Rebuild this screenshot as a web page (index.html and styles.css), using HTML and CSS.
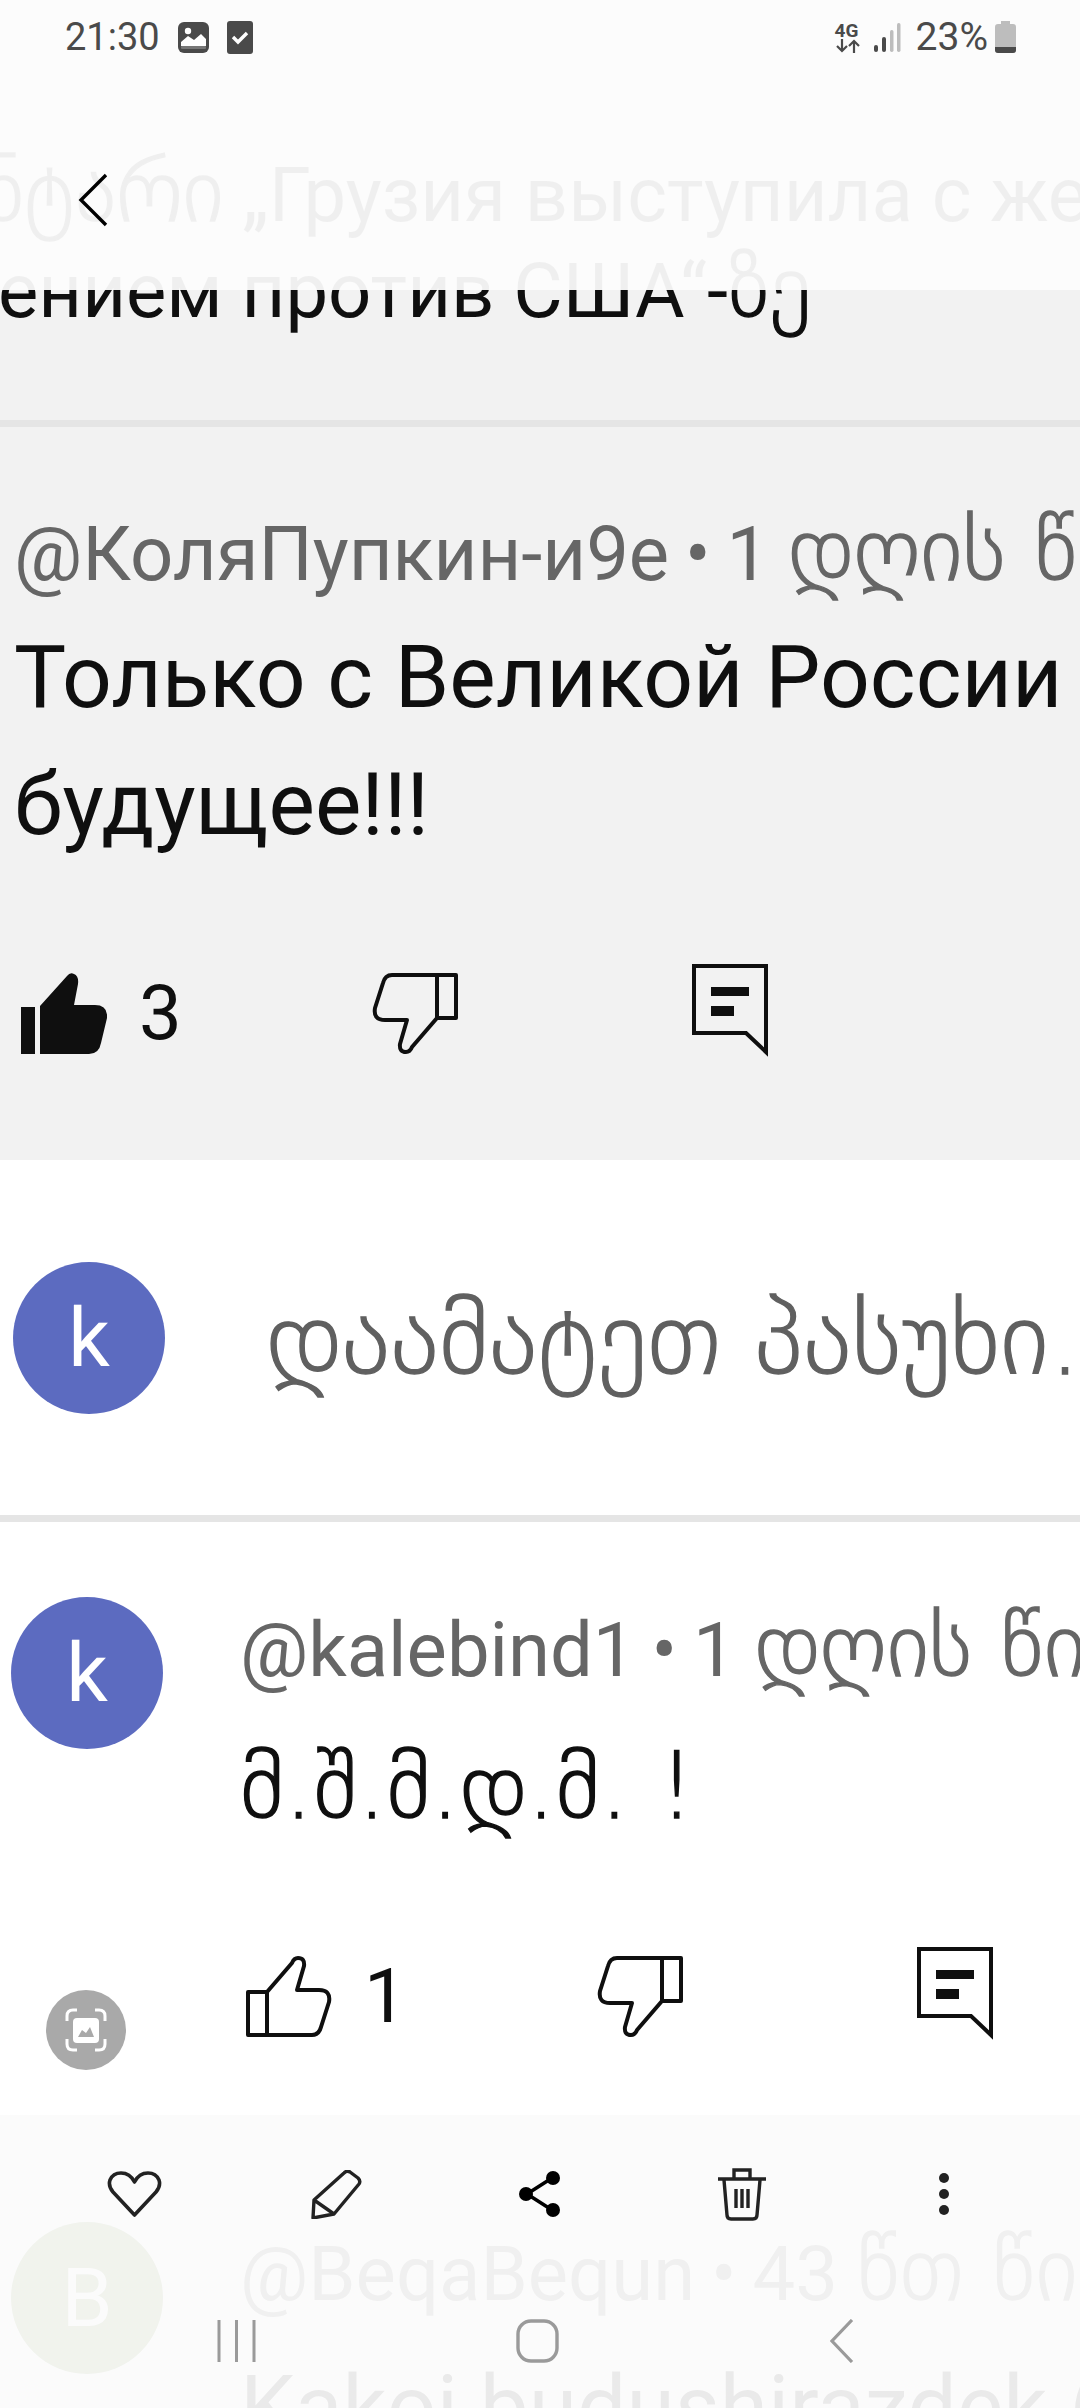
FILE: index.html
```html
<!DOCTYPE html>
<html lang="ka">
<head>
    <meta charset="UTF-8">
    <meta name="viewport" content="width=device-width, initial-scale=1.0">
    <title>პასუხები</title>
    <link rel="stylesheet" href="styles.css">
</head>
<body>
    <svg class="defs" width="0" height="0">
        <symbol id="thumb" viewBox="0 0 86 81">
            <path d="M21 36H2V79H66Q73 79 75 71L83 46Q85 34 73 34H51L58 10Q59 2 52 2Q48 2 46 7ZM21 36V79" fill="none" stroke="#0f0f0f" stroke-width="4" stroke-linejoin="round"/>
        </symbol>
        <symbol id="thumb-on" viewBox="0 0 86 81">
            <path d="M0 34H14V81H0ZM19 33L46 3Q49 -1 53 1Q58 3 57 11L53 32H74Q87 32 86 45L80 70Q78 81 68 81H19Z" fill="#0f0f0f"/>
        </symbol>
        <symbol id="reply" viewBox="0 0 76 95">
            <path d="M2 3H74V89L54 70H2Z" fill="none" stroke="#0f0f0f" stroke-width="4"/>
            <path d="M19 24H57V33H19ZM19 43H42V53H19Z" fill="#0f0f0f"/>
        </symbol>
    </svg>

    <div class="page">
        <main>
            <section class="thread">
                <div class="title">
                    <div class="title-line one"><span class="ka">ნტარი</span> „Грузия выступила с жесточайшим</div>
                    <div class="title-line two">ением против США“-<span class="ka">ზე</span></div>
                </div>
                <div class="rule"></div>
                <article class="comment-top">
                    <div class="meta">@КоляПупкин-и9е <span class="dot">•</span> 1 <span class="ka">დღის წინ</span></div>
                    <p class="body-line first">Только с Великой России</p>
                    <p class="body-line">будущее!!!</p>
                    <div class="actions">
                        <div class="slot like">
                            <svg class="thumb"><use href="#thumb-on"/></svg>
                            <span class="count">3</span>
                        </div>
                        <div class="slot dislike">
                            <svg class="thumb flip"><use href="#thumb"/></svg>
                        </div>
                        <svg class="reply"><use href="#reply"/></svg>
                    </div>
                </article>
            </section>

            <section class="add-reply">
                <div class="avatar">k</div>
                <div class="placeholder ka">დაამატეთ პასუხი...</div>
            </section>
            <div class="rule"></div>

            <article class="comment">
                <div class="avatar">k</div>
                <div class="comment-main">
                    <div class="meta">@kalebind1 <span class="dot">•</span> 1 <span class="ka">დღის წინ</span></div>
                    <p class="body-line ka geo-body">მ.შ.მ.დ.მ. !</p>
                    <div class="actions">
                        <div class="slot like">
                            <svg class="thumb"><use href="#thumb"/></svg>
                            <span class="count">1</span>
                        </div>
                        <div class="slot dislike">
                            <svg class="thumb flip"><use href="#thumb"/></svg>
                        </div>
                        <svg class="reply"><use href="#reply"/></svg>
                    </div>
                </div>
            </article>

            <article class="comment next">
                <div class="avatar green">B</div>
                <div class="comment-main">
                    <div class="meta">@BeqaBequn <span class="dot">•</span> 43 <span class="ka">წთ წინ</span></div>
                    <p class="body-line">Kakoi budushirazdek (</p>
                </div>
            </article>
        </main>

        <header class="topbar">
            <div class="status">
                <div class="status-left">
                    <span class="time">21:30</span>
                    <svg class="st-img" viewBox="0 0 31 31">
                        <rect width="31" height="31" rx="6" fill="#4a4a4a"/>
                        <circle cx="10" cy="9" r="3.2" fill="#fff"/>
                        <path d="M3 24V20L10 14L16 18L23 12L28 17V24Z" fill="#fff"/>
                        <rect x="3" y="24" width="25" height="3" rx="1" fill="#fff" opacity=".25"/>
                    </svg>
                    <svg class="st-check" viewBox="0 0 26 33">
                        <rect width="26" height="33" rx="3" fill="#4a4a4a"/>
                        <path d="M6 16L11 21L20 12" fill="none" stroke="#fff" stroke-width="3.4"/>
                    </svg>
                </div>
                <div class="status-right">
                    <div class="net">
                        <span class="net-label">4G</span>
                        <svg class="net-arrows" viewBox="0 0 26 14">
                            <path d="M7 0V12M2 7L7 12L12 7M19 14V2M14 7L19 2L24 7" fill="none" stroke="#4a4a4a" stroke-width="2.2"/>
                        </svg>
                    </div>
                    <svg class="signal" viewBox="0 0 27 29">
                        <rect x="0" y="22" width="4" height="7" rx="2" fill="#4a4a4a"/>
                        <rect x="8" y="14" width="4" height="15" rx="2" fill="#4a4a4a"/>
                        <rect x="16" y="7" width="3.5" height="22" rx="1.7" fill="#bdbdbd"/>
                        <rect x="23" y="0" width="3.5" height="29" rx="1.7" fill="#bdbdbd"/>
                    </svg>
                    <span class="battery-text">23%</span>
                    <svg class="battery" viewBox="0 0 21 32">
                        <path d="M6 0H15V3H18Q21 3 21 6V29Q21 32 18 32H3Q0 32 0 29V6Q0 3 3 3H6Z" fill="#bdbdbd"/>
                        <path d="M0 26H21V29Q21 32 18 32H3Q0 32 0 29Z" fill="#4a4a4a"/>
                    </svg>
                </div>
            </div>
            <svg class="back" viewBox="0 0 30 54">
                <path d="M28 2L3 27L28 52" fill="none" stroke="#000" stroke-width="3.4"/>
            </svg>
        </header>

        <button class="capture" aria-label="capture">
            <svg viewBox="0 0 80 80" width="80" height="80">
                <path d="M21 31V26Q21 20 27 20H31M49 20H53Q59 20 59 26V31M59 49V54Q59 60 53 60H49M31 60H27Q21 60 21 54V49" fill="none" stroke="#fff" stroke-width="3"/>
                <rect x="27" y="28" width="26" height="25" rx="4" fill="#fff"/>
                <path d="M32 47L36 40L40 43L44 37L48 47Z" fill="#a9a9a9"/>
            </svg>
        </button>

        <footer class="bottombar">
            <div class="tools">
                <svg class="heart" viewBox="0 0 55 46">
                    <path d="M27.5 44L6 21Q1 15 3 9Q6 2 14 2Q23 2 27.5 11Q32 2 41 2Q49 2 52 9Q54 15 49 21Z" fill="none" stroke="#222" stroke-width="3.6" stroke-linejoin="round"/>
                </svg>
                <svg class="pencil" viewBox="0 0 51 49">
                    <path d="M33 3Q36 0 39 2L47 8Q50 11 48 14L23 44L2 48L3 30ZM3 30L23 44" fill="none" stroke="#222" stroke-width="3.4" stroke-linejoin="round"/>
                </svg>
                <svg class="share" viewBox="0 0 41 46">
                    <path d="M33 7L8 23L33 39" fill="none" stroke="#000" stroke-width="3.6"/>
                    <circle cx="34" cy="7" r="7" fill="#000"/>
                    <circle cx="7" cy="23" r="7" fill="#000"/>
                    <circle cx="34" cy="39" r="7" fill="#000"/>
                </svg>
                <svg class="trash" viewBox="0 0 48 54">
                    <path d="M0 12H48M16 11V3H32V11M6 13L9 48Q9 52 13 52H35Q39 52 39 48L42 13M18 22V41M24 22V41M30 22V41" fill="none" stroke="#222" stroke-width="3.4"/>
                </svg>
                <svg class="more" viewBox="0 0 12 44">
                    <circle cx="6" cy="6" r="5" fill="#222"/>
                    <circle cx="6" cy="22" r="5" fill="#222"/>
                    <circle cx="6" cy="38" r="5" fill="#222"/>
                </svg>
            </div>
            <nav class="softkeys">
                <svg class="key recents" viewBox="0 0 39 42">
                    <path d="M2 0V42M19.500 0V42M37 0V42" stroke="#9a9a9a" stroke-width="3" fill="none"/>
                </svg>
                <svg class="key home" viewBox="0 0 43 44">
                    <rect x="2" y="2" width="39" height="40" rx="13" fill="none" stroke="#9a9a9a" stroke-width="3.4"/>
                </svg>
                <svg class="key prev" viewBox="0 0 24 44">
                    <path d="M22 1L2 22L22 43" fill="none" stroke="#9a9a9a" stroke-width="3.2"/>
                </svg>
            </nav>
        </footer>
    </div>
</body>
</html>
```

FILE: styles.css
```css
body {
    margin: 0;
    background: #fff;
    font-family: Roboto, "DejaVu Sans", sans-serif;
    color: #0f0f0f;
}
.defs {
    position: absolute;
}
.page {
    position: relative;
    width: 1080px;
    height: 2408px;
    overflow: hidden;
}
p {
    margin: 0;
}
.thread {
    background: #f2f2f2;
    height: 1160px;
    overflow: hidden;
}
.rule {
    height: 7px;
    background: #e5e5e5;
}
.ka {
    font-family: "DejaVu Sans", sans-serif;
    font-weight: 200;
    -webkit-text-stroke: 1.3px currentColor;
}

/* title under the top bar */
.title {
    padding-top: 147px;
    margin-bottom: 81px;
    font-size: 76px;
    line-height: 96px;
    white-space: nowrap;
}
.title .ka {
    font-size: 88px;
    line-height: 0;
}
.title-line.one {
    margin-left: -18px;
}
.title-line.two {
    margin-left: -2px;
}

/* comments */
.comment-top {
    padding: 0 0 0 14px;
}
.meta {
    font-size: 76px;
    line-height: 84px;
    color: #666;
    white-space: nowrap;
}
.comment-top .meta {
    margin-top: 85px;
}
.dot {
    margin: 0 -3px;
}
.meta .ka {
    font-size: 90px;
    line-height: 0;
}
.body-line {
    font-size: 87.5px;
    line-height: 127px;
    white-space: nowrap;
}
.body-line.first {
    margin-top: 18px;
}
.actions {
    display: flex;
    align-items: center;
    height: 100px;
}
.comment-top .actions {
    margin: 95px 0 0 7px;
}
.slot {
    display: flex;
    align-items: center;
    flex: none;
}
.slot.like {
    width: 351px;
    gap: 32px;
}
.slot.dislike {
    width: 320px;
}
.thumb {
    width: 86px;
    height: 81px;
    flex: none;
}
.flip {
    transform: rotate(180deg);
}
.reply {
    width: 76px;
    height: 95px;
    flex: none;
    margin-bottom: 6px;
}
.count {
    font-size: 76px;
    line-height: 81px;
}

.add-reply {
    display: flex;
    align-items: center;
    height: 355px;
    padding-left: 13px;
    gap: 101px;
}
.avatar {
    width: 152px;
    height: 152px;
    border-radius: 50%;
    flex: none;
    background: #5c6bc0;
    color: #fff;
    font-size: 82px;
    line-height: 152px;
    text-align: center;
}
.avatar.green {
    background: #6c8942;
}
.placeholder {
    font-size: 104px;
    color: #606060;
    white-space: nowrap;
}
.comment {
    display: flex;
    gap: 77px;
    padding: 75px 0 0 11px;
}
.comment-main {
    min-width: 0;
    margin-top: 11px;
}
.geo-body {
    margin-top: 31px;
    font-size: 92px;
    color: #0f0f0f;
}
.comment .actions {
    margin: 96px 0 0 6px;
}
.comment.next {
    padding-top: 176px;
}
.comment.next .comment-main {
    margin-top: 10px;
}
.comment.next .body-line {
    margin-top: 28px;
}

/* top bar, lies over the scrolled text */
.topbar {
    position: absolute;
    top: 0;
    left: 0;
    right: 0;
    height: 290px;
    background: rgba(252, 252, 252, 0.95);
}
.status {
    display: flex;
    justify-content: space-between;
    align-items: center;
    height: 74px;
    padding: 0 64px 0 65px;
    color: #4a4a4a;
}
.status-left,
.status-right {
    display: flex;
    align-items: center;
}
.time {
    font-size: 38px;
    line-height: 44px;
    margin-right: 18px;
}
.st-img {
    width: 31px;
    height: 31px;
    margin-right: 18px;
}
.st-check {
    width: 26px;
    height: 33px;
}
.net {
    display: flex;
    flex-direction: column;
    width: 26px;
    margin-right: 13px;
}
.net-label {
    font-size: 19px;
    font-weight: 700;
    line-height: 17px;
}
.net-arrows {
    width: 26px;
    height: 14px;
}
.signal {
    width: 27px;
    height: 29px;
    margin-right: 15px;
}
.battery-text {
    font-size: 39px;
    line-height: 44px;
    margin-right: 7px;
}
.battery {
    width: 21px;
    height: 32px;
}
.back {
    display: block;
    width: 30px;
    height: 54px;
    margin: 99px 0 0 78px;
}

/* floating screenshot button */
.capture {
    position: absolute;
    left: 46px;
    top: 1990px;
    width: 80px;
    height: 80px;
    padding: 0;
    border: none;
    border-radius: 50%;
    background: #a9a9a9;
}

/* bottom bar */
.bottombar {
    position: absolute;
    left: 0;
    right: 0;
    bottom: 0;
    height: 293px;
    background: rgba(251, 251, 251, 0.93);
}
.tools {
    display: grid;
    grid-template-columns: repeat(5, 202.500px);
    justify-items: center;
    align-items: center;
    height: 54px;
    padding: 52px 0 0 33px;
}
.heart { width: 55px; height: 46px; }
.pencil { width: 51px; height: 49px; }
.share { width: 41px; height: 46px; }
.trash { width: 48px; height: 54px; }
.more { width: 12px; height: 44px; }
.softkeys {
    display: flex;
    align-items: center;
    margin-top: 98px;
    padding-left: 217px;
}
.key {
    flex: none;
}
.recents { width: 39px; height: 42px; margin-right: 260px; }
.home { width: 43px; height: 44px; margin-right: 271px; }
.prev { width: 24px; height: 44px; }
```
